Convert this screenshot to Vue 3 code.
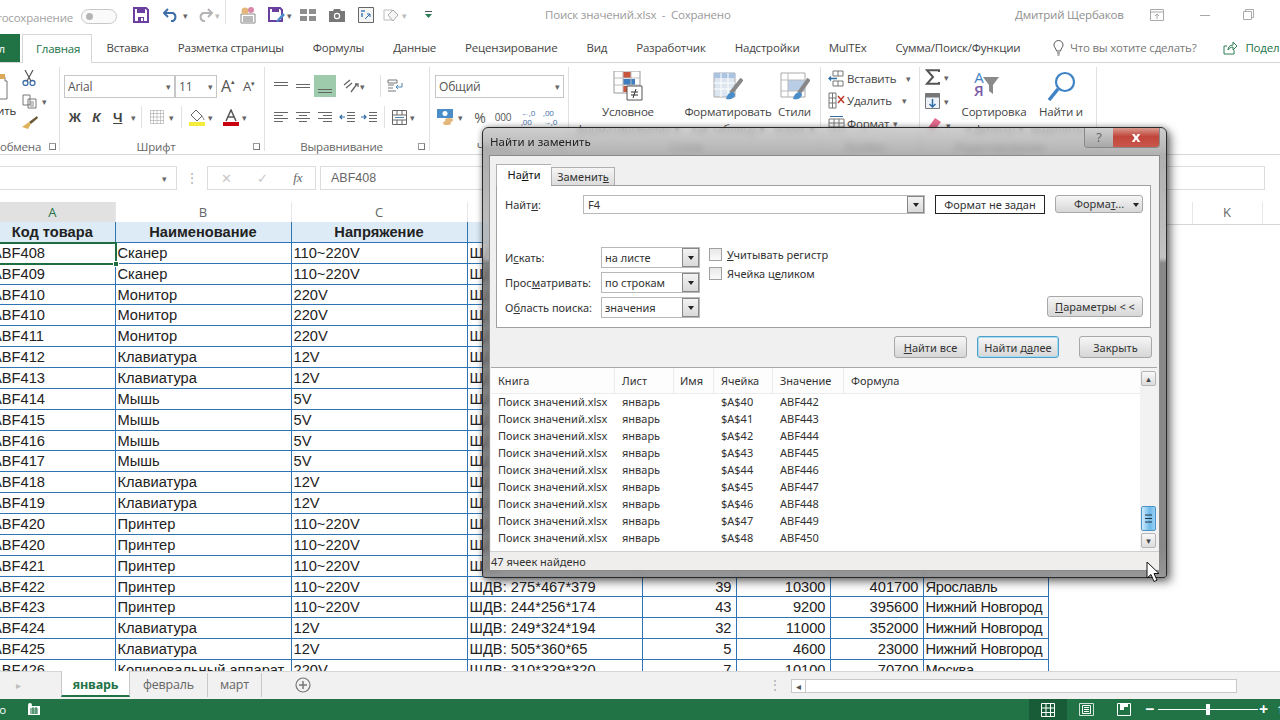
<template>
  <div class="excel">
    <!-- title bar -->
    <div class="titlebar">
      <div class="autosave"><span>Автосохранение</span></div>
      <div class="toggle"><i></i></div>
      <svg class="qa save" width="16" height="16" viewBox="0 0 16 16"><path d="M1 1h12l2 2v12H1z" fill="none" stroke="#6b3fa0" stroke-width="2"/><path d="M4 1h8v5H4zM5 10h6v5H5z" fill="#6b3fa0"/><path d="M8 11h2v3H8z" fill="#fff"/></svg>
      <svg class="qa undo" width="16" height="14" viewBox="0 0 16 14"><path d="M5 1L1 5l4 4M1 5h9a4.500 4.500 0 0 1 0 8H8" fill="none" stroke="#3f6fa8" stroke-width="2"/></svg>
      <span class="caret c-undo">▾</span>
      <svg class="qa redo" width="16" height="14" viewBox="0 0 16 14"><path d="M11 1l4 4-4 4M15 5H6a4.500 4.500 0 0 0 0 8h2" fill="none" stroke="#b5b5b5" stroke-width="2"/></svg>
      <span class="caret c-redo">▾</span>
      <span class="qa-sep"></span>
      <svg class="qa form" width="18" height="18" viewBox="0 0 18 18"><path d="M2 8h14v9H2z" fill="#fff" stroke="#888"/><path d="M4 11h10M4 13h10M4 15h10" stroke="#777"/><circle cx="6" cy="5" r="3.500" fill="#e3b779"/><circle cx="12" cy="4" r="3" fill="#d987a8"/></svg>
      <svg class="qa saveas" width="18" height="16" viewBox="0 0 18 16"><path d="M1 1h11l2 2v11H1z" fill="none" stroke="#6b3fa0" stroke-width="2"/><path d="M4 1h7v4H4z" fill="#6b3fa0"/><path d="M8 14l7-8 2 2-7 7z" fill="#4a8dc9"/></svg>
      <span class="caret c-saveas">▾</span>
      <svg class="qa grid4" width="16" height="12" viewBox="0 0 16 12"><path d="M0 0h7v5H0zM9 0h7v5H9zM0 7h7v5H0zM9 7h7v5H9z" fill="#8e8e8e"/></svg>
      <svg class="qa camera" width="16" height="13" viewBox="0 0 16 13"><path d="M0 2h4l1-2h6l1 2h4v11H0z" fill="#777"/><circle cx="8" cy="7" r="3.200" fill="#fff"/><circle cx="8" cy="7" r="2" fill="#777"/></svg>
      <svg class="qa pivot" width="16" height="16" viewBox="0 0 16 16"><path d="M.5.5h15v15H.5z" fill="#f4f4f4" stroke="#666"/><path d="M3 3h4v2H3zM3 6h2v4H3z" fill="#6f9bc7"/><path d="M7 12l5-5M9 7h3v3" stroke="#2f6ea5" fill="none"/></svg>
      <svg class="qa shape" width="16" height="15" viewBox="0 0 16 15"><path d="M1 2h8v10H1z" fill="none" stroke="#bbb"/><path d="M10 2l5 5-5 6-5-6z" fill="#f5f5f5" stroke="#aaa"/></svg>
      <span class="caret c-shape">▾</span>
      <svg class="qa more" width="7" height="8" viewBox="0 0 7 8"><path d="M0 0h7v1H0z" fill="#555"/><path d="M0 3h7L3.500 7z" fill="#2f7d55"/></svg>
      <div class="doc-title">Поиск значений.xlsx&nbsp; - &nbsp;Сохранено</div>
      <div class="user">Дмитрий Щербаков</div>
      <svg class="win w1" width="14" height="12" viewBox="0 0 14 12"><path d="M.5.5h13v11H.5z" fill="none" stroke="#aaa"/><path d="M.5 3h13M7 10V5M5 7l2-2 2 2" fill="none" stroke="#aaa"/></svg>
      <span class="win w2"></span>
      <svg class="win w3" width="11" height="11" viewBox="0 0 11 11"><path d="M.5 2.500h8v8h-8zM2.500 2.500v-2h8v8h-2" fill="none" stroke="#aaa"/></svg>
    </div>

    <!-- ribbon tabs -->
    <div class="tabs">
      <div class="tab-file"><span>Файл</span></div>
      <div class="tab active">Главная</div>
      <div v-for="t in tabs" :key="t" class="tab">{{ t }}</div>
      <svg class="bulb" width="11" height="16" viewBox="0 0 11 16"><path d="M3.500 11C3 8 1 7.500 1 5a4.500 4.500 0 0 1 9 0c0 2.500-2 3-2.500 6zM4 13h3M4.500 15h2" fill="none" stroke="#555"/></svg>
      <div class="tell">Что вы хотите сделать?</div>
      <svg class="share" width="14" height="14" viewBox="0 0 14 14"><path d="M4 5H1v8h10V9M5 9c0-3 2-5 5-5V1l4 4-4 4V6C8 6 6 7 5 9z" fill="none" stroke="#2f7d55"/></svg>
      <div class="share-text">Поделиться</div>
    </div>

    <!-- ribbon -->
    <div class="ribbon">
      <section class="group g-clip">
        <div class="body clip-body">
          <div class="paste">
            <svg width="8" height="26" viewBox="0 0 8 26"><path d="M-6 3h11v4h2v18H-6z" fill="#fff" stroke="#777"/><path d="M-3 0h8v5h-8z" fill="#dca85a"/></svg>
            <div class="paste-text"><span>Вставить</span></div>
          </div>
          <div class="clip-tools">
            <svg width="14" height="16" viewBox="0 0 14 16"><circle cx="3.500" cy="13" r="2.500" fill="none" stroke="#3f6fa8" stroke-width="1.300"/><circle cx="10.500" cy="13" r="2.500" fill="none" stroke="#3f6fa8" stroke-width="1.300"/><path d="M3 0l6 11M11 0L5 11" stroke="#555" stroke-width="1.200"/></svg>
            <div class="copy-row"><svg width="15" height="15" viewBox="0 0 15 15"><path d="M1 1h7v10H1zM6 5h8v9H6z" fill="#fff" stroke="#777"/><path d="M8 8h4M8 10h4M8 12h4" stroke="#888"/></svg><span class="caret">▾</span></div>
            <svg width="16" height="14" viewBox="0 0 16 14"><path d="M15 0l1 2-7 6-2-2z" fill="#6b5a3a"/><path d="M7 6l2 2-3 5-6-2z" fill="#e0b25c"/></svg>
          </div>
        </div>
        <div class="group-label"><span class="lbl-right"></span><span>обмена</span><i class="launcher"></i></div>
      </section>

      <section class="group g-font">
        <div class="body">
          <div class="row">
            <div class="combo c-name">Arial<span class="caret">▾</span></div>
            <div class="combo c-size">11<span class="caret">▾</span></div>
            <span class="grow-a big">A<sup>▴</sup></span>
            <span class="grow-a small">A<sup>▾</sup></span>
          </div>
          <div class="row row2">
            <b class="fmt f-b">Ж</b>
            <b class="fmt f-i">К</b>
            <b class="fmt f-u">Ч</b>
            <span class="caret c14">▾</span>
            <span class="vsep"></span>
            <svg class="ml9" width="14" height="14" viewBox="0 0 14 14"><path d="M.5.5h13v13H.5zM7 .5v13M.5 7h13M.5 3.500h13M.5 10.500h13M3.500.5v13M10.500.5v13" fill="none" stroke="#999" stroke-dasharray="1 1"/></svg>
            <span class="caret c9">▾</span>
            <span class="vsep sep-fill"></span>
            <svg class="ml7" width="16" height="17" viewBox="0 0 16 17"><path d="M7 1l6 6-5 5-6-6z" fill="#fff" stroke="#666"/><path d="M13 7c1 2 2 3 2 4" stroke="#888"/><path d="M0 13h16v4H0z" fill="#f3ec3c"/></svg>
            <span class="caret c8">▾</span>
            <svg class="ml8" width="16" height="17" viewBox="0 0 16 17"><path d="M3 12L8 1l5 11M5 8h6" fill="none" stroke="#555" stroke-width="1.500"/><path d="M0 13h16v4H0z" fill="#c8000f"/></svg>
            <span class="caret c8">▾</span>
          </div>
        </div>
        <div class="group-label"><span class="lbl-right"></span><span>Шрифт</span><i class="launcher"></i></div>
      </section>

      <section class="group g-align">
        <div class="body">
          <div class="row">
            <svg class="cell22" width="14" height="8" viewBox="0 0 14 8"><path d="M0 .5h14M0 3.500h14" stroke="#666"/></svg>
            <svg class="cell22" width="14" height="8" viewBox="0 0 14 8"><path d="M0 2.500h14M0 5.500h14" stroke="#666"/></svg>
            <div class="al-active"><svg width="14" height="8" viewBox="0 0 14 8"><path d="M0 4.500h14M0 7.500h14" stroke="#666"/></svg></div>
            <svg class="orient" width="16" height="14" viewBox="0 0 16 14"><path d="M1 6l6-5M3 9l6-5M8 13l6-8M12 5h3v3" fill="none" stroke="#666" stroke-width="1.300"/></svg>
            <span class="caret c5">▾</span>
            <span class="vsep sep-wrap"></span>
            <svg class="wrap" width="16" height="16" viewBox="0 0 16 16"><path d="M1 2h9v3H1zM1 7h6M1 10h5M1 13h8" fill="none" stroke="#777"/><path d="M15 5v4H9M11 7L9 9l2 2" fill="none" stroke="#4b86b4"/></svg>
          </div>
          <div class="row row2">
            <svg class="cell22" width="14" height="11" viewBox="0 0 14 11"><path d="M0 .5h14M0 3.500h9M0 6.500h14M0 9.500h9" stroke="#666"/></svg>
            <svg class="cell22" width="14" height="11" viewBox="0 0 14 11"><path d="M0 .5h14M3 3.500h8M0 6.500h14M3 9.500h8" stroke="#666"/></svg>
            <svg class="cell22" width="14" height="11" viewBox="0 0 14 11"><path d="M0 .5h14M5 3.500h9M0 6.500h14M5 9.500h9" stroke="#666"/></svg>
            <svg class="cell22" width="16" height="11" viewBox="0 0 16 11"><path d="M8 .5h8M8 3.500h8M8 6.500h8M8 9.500h8" stroke="#666"/><path d="M6 5H1M3 3L1 5l2 2" fill="none" stroke="#2f6ea5" stroke-width="1.200"/></svg>
            <svg class="cell22" width="16" height="11" viewBox="0 0 16 11"><path d="M8 .5h8M8 3.500h8M8 6.500h8M8 9.500h8" stroke="#666"/><path d="M0 5h5M3 3l2 2-2 2" fill="none" stroke="#2f6ea5" stroke-width="1.200"/></svg>
            <span class="vsep sep-merge"></span>
            <svg class="merge" width="15" height="15" viewBox="0 0 15 15"><path d="M.5.5h14v14H.5zM.5 5h14M.5 10h14M5 .5V5M10 .5V5M5 10v4.500M10 10v4.500" fill="none" stroke="#666"/><path d="M3 7.500h9" stroke="#4b86b4"/></svg>
            <span class="caret c8">▾</span>
          </div>
        </div>
        <div class="group-label"><span class="lbl-right"></span><span>Выравнивание</span><i class="launcher"></i></div>
      </section>

      <section class="group g-num">
        <div class="body">
          <div class="row">
            <div class="combo c-fmt">Общий<span class="caret">▾</span></div>
          </div>
          <div class="row row2">
            <svg class="ml2" width="17" height="16" viewBox="0 0 17 16"><path d="M0 0h16v9H0z" fill="#4a8dc9"/><circle cx="8" cy="4.500" r="2.500" fill="#fff"/><ellipse cx="12" cy="11" rx="4" ry="2" fill="#e3b779"/><ellipse cx="10" cy="14" rx="4" ry="2" fill="#e3b779"/></svg>
            <span class="caret c7">▾</span>
            <span class="num pct">%</span>
            <span class="num thou">000</span>
            <span class="num dec">←,0<br>,00</span>
            <span class="num dec dec2">,00<br>→,0</span>
          </div>
        </div>
        <div class="group-label"><span class="lbl-right"></span><span>Число</span><i class="launcher"></i></div>
      </section>

      <section class="group g-styles">
        <div class="big-btn b1">
          <svg width="30" height="30" viewBox="0 0 30 30"><path d="M1 0h26v22H1z" fill="#fff" stroke="#999"/><path d="M10 1h8v6h-8z" fill="#c8553d"/><path d="M10 8h12v6H10z" fill="#3f7fc1"/><path d="M10 15h6v6h-6z" fill="#c8553d"/><path d="M10 0v22M18 0v22M1 7h26M1 14h26" stroke="#bbb" fill="none"/><path d="M14 15h15v14H14z" fill="#fff" stroke="#555"/><path d="M18 21h7M18 24h7M23 18l-3 9" stroke="#333"/></svg>
          <span>Условное<br>форматирование ▾</span>
        </div>
        <div class="big-btn b2">
          <svg width="30" height="30" viewBox="0 0 30 30"><path d="M1 2h21v24H1z" fill="#dde6f0" stroke="#aaa"/><path d="M1 2h21v5H1z" fill="#a9c3e0"/><path d="M8 2v24M15 2v24M1 12h21M1 18h21" stroke="#fff"/><path d="M29 8L18 22" stroke="#888" stroke-width="4"/><path d="M20 21c-4 0-6 3-7 7 5 1 9-1 9-5z" fill="#4a8dc9"/></svg>
          <span>Форматировать<br>как таблицу ▾</span>
        </div>
        <div class="big-btn b3">
          <svg width="30" height="30" viewBox="0 0 30 30"><path d="M1 2h24v24H1z" fill="#fff" stroke="#aaa"/><path d="M8 9h17v11H8z" fill="#b9cde6"/><path d="M8 2v24M1 9h24M1 20h24" stroke="#bbb"/><path d="M29 8L19 22" stroke="#888" stroke-width="4"/><path d="M20 21c-4 0-6 3-7 7 5 1 9-1 9-5z" fill="#4a8dc9"/></svg>
          <span>Стили<br>ячеек ▾</span>
        </div>
        <div class="group-label styles-label"><span>Стили</span></div>
      </section>

      <section class="group g-cells">
        <div class="cell-tools">
          <div class="cell-tool">
            <svg width="17" height="17" viewBox="0 0 17 17"><path d="M5 1h10v5H5zM5 11h10v5H5zM10 1v5M10 11v5" fill="none" stroke="#777"/><path d="M9 8.500H1M3 6.500l-2 2 2 2" fill="none" stroke="#2f6ea5" stroke-width="1.300"/></svg>
            <span>Вставить</span><span class="caret">▾</span>
          </div>
          <div class="cell-tool">
            <svg width="17" height="17" viewBox="0 0 17 17"><path d="M1 1h7v15H1zM1 6h7M1 11h7M4.500 1v15" fill="none" stroke="#777"/><path d="M10 4l6 7M16 4l-6 7" stroke="#c0392b" stroke-width="1.500"/></svg>
            <span>Удалить</span><span class="caret">▾</span>
          </div>
          <div class="cell-tool">
            <svg width="17" height="17" viewBox="0 0 17 17"><path d="M1 4h15v12H1zM1 8h15M1 12h15M6 4v12M11 4v12" fill="none" stroke="#777"/><path d="M2 1.500h13" stroke="#2f6ea5"/></svg>
            <span>Формат</span><span class="caret">▾</span>
          </div>
        </div>
        <div class="group-label"><span>Ячейки</span></div>
      </section>

      <section class="group g-edit">
        <div class="edit-left">
          <div class="edit-item">
            <svg width="15" height="16" viewBox="0 0 15 16"><path d="M14 3V1.200H2L8 8l-6 6.800h12V13" fill="none" stroke="#555" stroke-width="2"/></svg>
            <span class="caret">▾</span>
          </div>
          <div class="edit-item">
            <svg width="15" height="16" viewBox="0 0 15 16"><path d="M.5.5h14v15H.5z" fill="#eef3f9" stroke="#777"/><path d="M.5.5h14v4H.5z" fill="#777"/><path d="M7.500 6v8M4.500 11l3 3 3-3" fill="none" stroke="#2f6ea5" stroke-width="1.500"/></svg>
            <span class="caret">▾</span>
          </div>
          <div class="edit-item">
            <svg width="17" height="14" viewBox="0 0 17 14"><path d="M10 0l6 4-7 9-6-3z" fill="#e56b8d"/><path d="M3 10l6 3H3z" fill="#f1b9c7"/></svg>
            <span class="caret">▾</span>
          </div>
        </div>
        <div class="big-btn b-sort">
          <div class="sort-ico"><span class="az"><em>А</em><em class="ya">Я</em></span><svg width="16" height="17" viewBox="0 0 16 17"><path d="M0 0h16l-6 8v9l-4-3V8z" fill="#8a8a8a"/></svg></div>
          <span>Сортировка<br>и фильтр ▾</span>
        </div>
        <div class="big-btn b-find">
          <svg width="30" height="30" viewBox="0 0 30 30"><circle cx="19" cy="11" r="9" fill="#fff" stroke="#3f83c4" stroke-width="2.200"/><path d="M12 18L3 29" stroke="#3f83c4" stroke-width="3.500"/></svg>
          <span>Найти и<br>выделить ▾</span>
        </div>
        <div class="group-label edit-label"><span>Редактирование</span></div>
      </section>
    </div>

    <!-- formula bar -->
    <div class="formula-bar">
      <div class="namebox"><span class="caret">▾</span></div>
      <span class="dots">⋮</span>
      <div class="fx-btns">
        <span>✕</span><span>✓</span><em>fx</em>
      </div>
      <div class="fx-input">ABF408</div>
    </div>

    <!-- sheet -->
    <div class="sheet">
      <div class="col-heads">
        <div v-for="c in cols" :key="c" class="col-head" :class="{ sel: c === 'A' }">{{ c }}</div>
      </div>
      <div class="table">
        <div class="th" v-for="(h, i) in heads" :key="i">{{ h }}</div>
        <template v-for="(r, i) in rows" :key="i">
          <div class="td" :class="{ current: i === 0 }">{{ r[0] }}</div>
          <div class="td">{{ r[1] }}</div>
          <div class="td">{{ r[2] }}</div>
          <div class="td">{{ r[3] }}</div>
          <div class="td num-cell">{{ r[4] }}</div>
          <div class="td num-cell">{{ r[5] }}</div>
          <div class="td num-cell">{{ r[6] }}</div>
          <div class="td city">{{ r[7] }}</div>
        </template>
      </div>
    </div>

    <!-- sheet tabs -->
    <div class="sheetbar">
      <span class="sheet-prev">▸</span>
      <div class="sheet-tab current-tab">январь</div>
      <div class="sheet-tab t-feb">февраль</div>
      <div class="sheet-tab t-mar">март</div>
      <svg class="add" width="16" height="16" viewBox="0 0 16 16"><circle cx="8" cy="8" r="7" fill="none" stroke="#777" stroke-width="1.200"/><path d="M4 8h8M8 4v8" stroke="#777" stroke-width="1.500"/></svg>
      <span class="dots sb-dots">⋮</span>
      <div class="hscroll"><span class="hs-left">◂</span><div class="hs-track"></div></div>
    </div>

    <!-- status bar -->
    <div class="statusbar">
      <span class="ready"><span>Готово</span></span>
      <svg class="macro" width="14" height="13" viewBox="0 0 14 13"><path d="M1 3h12v9H1z" fill="#fff"/><path d="M3 6h8M3 8h8M3 10h8M6 4v7M9 4v7" stroke="#217346"/><circle cx="3" cy="2" r="2" fill="#fff"/></svg>
      <div class="view-btn on"><svg width="14" height="14" viewBox="0 0 14 14"><path d="M.5.5h13v13H.5zM.5 5h13M.5 9.500h13M5 .5v13M9.500.5v13" fill="none" stroke="#fff"/></svg></div>
      <div class="view-btn"><svg width="15" height="13" viewBox="0 0 15 13"><path d="M.5.5h14v12H.5z" fill="none" stroke="#cfe3d8"/><path d="M3.500 2.500h8v8h-8zM5 4.500h5M5 6.500h5M5 8.500h5" fill="none" stroke="#fff"/></svg></div>
      <div class="view-btn"><svg width="14" height="13" viewBox="0 0 14 13"><path d="M.5.5h13v12H.5z" fill="none" stroke="#fff"/><path d="M3 0h4v7H3zM7 0v4h4V0z" fill="#fff"/></svg></div>
      <span class="zoom-btn minus">−</span>
      <div class="slider"><i></i></div>
      <span class="zoom-btn plus">+</span>
      <span class="zoom-pct">1</span>
    </div>

    <!-- find dialog -->
    <div class="dialog">
      <div class="dlg-title">
        <span>Найти и заменить</span>
        <div class="dlg-btns"><span class="help">?</span><span class="close">x</span></div>
      </div>
      <div class="dlg-inner">
        <div class="dlg-tabs">
          <div class="dlg-tab on">На<u>й</u>ти</div>
          <div class="dlg-tab">Заменит<u>ь</u></div>
        </div>
        <div class="dlg-panel">
          <div class="find-row">
            <label class="find-label">Найт<u>и</u>:</label>
            <div class="find-input"><span>F4</span><i class="drop"></i></div>
            <div class="no-format">Формат не задан</div>
            <button class="btn fmt-btn"><span>Форма<u>т</u>...</span><i></i></button>
          </div>
          <div class="opts">
            <div class="opt-combos">
              <div class="opt" v-for="o in options" :key="o.value">
                <label><span v-html="o.label"></span></label>
                <div class="opt-combo"><span>{{ o.value }}</span><i class="drop"></i></div>
              </div>
            </div>
            <div class="checks">
              <div class="check"><i></i><span><u>У</u>читывать регистр</span></div>
              <div class="check"><i></i><span>Ячейка ц<u>е</u>ликом</span></div>
            </div>
            <button class="btn params"><span><u>П</u>араметры &lt; &lt;</span></button>
          </div>
        </div>
        <div class="dlg-actions">
          <button class="btn"><u>Н</u>айти все</button>
          <button class="btn primary">Найти д<u>а</u>лее</button>
          <button class="btn">Закрыть</button>
        </div>
        <div class="results">
          <div class="res-main">
            <div class="res-head">
              <div v-for="h in resHeads" :key="h" class="res-col">{{ h }}</div>
            </div>
            <div class="res-row" v-for="r in results" :key="r.cell">
              <span class="rc0">Поиск значений.xlsx</span>
              <span class="rc1">январь</span>
              <span class="rc2"></span>
              <span class="rc3">{{ r.cell }}</span>
              <span class="rc4">{{ r.value }}</span>
            </div>
          </div>
          <div class="res-scroll">
            <span class="sb-btn">▴</span>
            <span class="sb-thumb"><svg width="7" height="9" viewBox="0 0 7 9"><path d="M0 1h7M0 4.500h7M0 8h7" stroke="#234" stroke-width="1"/></svg></span>
            <span class="sb-btn">▾</span>
          </div>
        </div>
        <div class="dlg-status">47 ячеек найдено</div>
      </div>
    </div>

    <!-- mouse cursor -->
    <svg class="cursor" width="14" height="22" viewBox="0 0 14 22"><path d="M1 1v16l4-3.500 3 7 3-1.300-3-6.700h5z" fill="#fff" stroke="#111"/></svg>
  </div>
</template>

<script setup>
const tabs = ['Вставка', 'Разметка страницы', 'Формулы', 'Данные', 'Рецензирование', 'Вид', 'Разработчик', 'Надстройки', 'MulTEx', 'Сумма/Поиск/Функции']
const cols = ['A', 'B', 'C', 'D', 'E', 'F', 'G', 'H', 'I', 'J', 'K', 'L']
const heads = ['Код товара', 'Наименование', 'Напряжение', 'Размеры', 'Кол-во', 'Цена', 'Сумма', 'Город']

const V = '110~220V'
const rows = [
  ['ABF408', 'Сканер', V, 'ШДВ'],
  ['ABF409', 'Сканер', V, 'ШДВ'],
  ['ABF410', 'Монитор', '220V', 'ШДВ'],
  ['ABF410', 'Монитор', '220V', 'ШДВ'],
  ['ABF411', 'Монитор', '220V', 'ШДВ'],
  ['ABF412', 'Клавиатура', '12V', 'ШДВ'],
  ['ABF413', 'Клавиатура', '12V', 'ШДВ'],
  ['ABF414', 'Мышь', '5V', 'ШДВ'],
  ['ABF415', 'Мышь', '5V', 'ШДВ'],
  ['ABF416', 'Мышь', '5V', 'ШДВ'],
  ['ABF417', 'Мышь', '5V', 'ШДВ'],
  ['ABF418', 'Клавиатура', '12V', 'ШДВ'],
  ['ABF419', 'Клавиатура', '12V', 'ШДВ'],
  ['ABF420', 'Принтер', V, 'ШДВ'],
  ['ABF420', 'Принтер', V, 'ШДВ'],
  ['ABF421', 'Принтер', V, 'ШДВ'],
  ['ABF422', 'Принтер', V, 'ШДВ: 275*467*379', 39, 10300, 401700, 'Ярославль'],
  ['ABF423', 'Принтер', V, 'ШДВ: 244*256*174', 43, 9200, 395600, 'Нижний Новгород'],
  ['ABF424', 'Клавиатура', '12V', 'ШДВ: 249*324*194', 32, 11000, 352000, 'Нижний Новгород'],
  ['ABF425', 'Клавиатура', '12V', 'ШДВ: 505*360*65', 5, 4600, 23000, 'Нижний Новгород'],
  ['ABF426', 'Копировальный аппарат', '220V', 'ШДВ: 310*329*320', 7, 10100, 70700, 'Москва']
]

const options = [
  { label: 'И<u>с</u>кать:', value: 'на листе' },
  { label: 'Прос<u>м</u>атривать:', value: 'по строкам' },
  { label: 'О<u>б</u>ласть поиска:', value: 'значения' }
]

const resHeads = ['Книга', 'Лист', 'Имя', 'Ячейка', 'Значение', 'Формула']
const results = Array.from({ length: 9 }, (_, i) => ({
  cell: `$A$${40 + i}`,
  value: `ABF${442 + i}`
}))
</script>

<style>
html, body { margin: 0; background: #fff; overflow: hidden; }
</style>

<style scoped>
.excel {
  position: relative;
  width: 1280px;
  height: 720px;
  overflow: hidden;
  display: flex;
  flex-direction: column;
  background: #fff;
  font-family: "Open Sans", "Noto Sans", sans-serif;
  font-size: 11.500px;
  letter-spacing: -.2px;
  color: #444;
}
.caret { font-size: 9px; color: #666; line-height: 1; }

/* title bar */
.titlebar { height: 34px; flex: none; display: flex; align-items: center; position: relative; color: #999; padding-bottom: 4px; box-sizing: border-box; }
.autosave { width: 73px; display: flex; justify-content: flex-end; overflow: hidden; white-space: nowrap; margin-top: 4px; color: #a2a2a2; }
.toggle { width: 36px; height: 15px; margin: 2px 0 0 8px; border: 1px solid #c8c8c8; border-radius: 9px; box-sizing: border-box; background: #fafafa; display: flex; align-items: center; padding-left: 4px; }
.toggle i { width: 7px; height: 7px; border-radius: 50%; background: #b5b5b5; }
.qa { flex: none; }
.save { margin-left: 16px; }
.undo { margin-left: 14px; }
.c-undo { margin-left: 4px; }
.redo { margin-left: 9px; }
.c-redo { margin-left: 2px; color: #bbb; }
.qa-sep { width: 1px; height: 24px; background: #e1e1e1; margin: -6px 0 0 5px; }
.form { margin-left: 13px; }
.saveas { margin-left: 11px; }
.c-saveas { margin-left: 1px; }
.grid4 { margin-left: 9px; }
.camera { margin-left: 13px; }
.pivot { margin-left: 13px; }
.shape { margin-left: 9px; }
.c-shape { margin-left: 3px; color: #bbb; }
.more { margin-left: 18px; }
.doc-title { position: absolute; left: 545px; top: 7px; color: #9a9a9a; white-space: nowrap; }
.user { position: absolute; left: 1015px; top: 7px; color: #8f8f8f; white-space: nowrap; }
.win { position: absolute; }
.w1 { left: 1150px; top: 9px; }
.w2 { left: 1200px; top: 15px; width: 10px; height: 1px; background: #aaa; }
.w3 { left: 1243px; top: 9px; }

/* ribbon tabs */
.tabs { height: 29px; flex: none; display: flex; border-bottom: 1px solid #d6d6d6; box-sizing: border-box; position: relative; white-space: nowrap; }
.tabs > * { flex: none; }
.tab-file { width: 20px; background: #217346; color: #fff; display: flex; justify-content: flex-end; overflow: hidden; align-items: center; margin-right: 2px; height: 28px; padding-right: 15px; box-sizing: border-box; }
.tab { padding: 0 14.5px; line-height: 28px; color: #444; }
.tab.active { color: #217346; background: #fff; border: 1px solid #d6d6d6; border-bottom: 0; height: 29px; box-sizing: border-box; width: 70px; padding: 0 13px; line-height: 28px; margin-right: 0; }
.bulb { margin: 6px 0 0 18px; }
.tell { margin: 0 0 0 6px; line-height: 28px; color: #777; }
.share { margin: 7px 0 0 27px; }
.share-text { margin-left: 8px; line-height: 28px; color: #217346; }

/* ribbon */
.ribbon { height: 92px; flex: none; display: flex; border-bottom: 1px solid #d6d6d6; box-sizing: border-box; }
.group { flex: none; position: relative; display: flex; flex-direction: column; box-sizing: border-box; border-right: 1px solid #e1e1e1; margin: 4px 0; height: 84px; }
.body { height: 66px; padding-top: 7px; box-sizing: content-box; }
.group-label { margin-top: auto; margin-bottom: -4px; height: 18px; padding-right: 16px; display: grid; grid-template-columns: 1fr auto 1fr; align-items: center; color: #666; font-size: 11.500px; white-space: nowrap; }
.group-label span:only-child { grid-column: 2; }
.launcher { justify-self: end; margin-right: -12px; width: 6px; height: 6px; border-left: 1px solid #999; border-top: 1px solid #999; box-shadow: inset -2px -2px 0 -1px #777; }
.row { display: flex; align-items: center; height: 24px; }
.row2 { margin-top: 7px; }
.vsep { width: 1px; height: 22px; background: #e1e1e1; flex: none; }

.g-clip { width: 60px; }
.clip-body { display: flex; }
.paste { width: 22px; display: flex; flex-direction: column; }
.paste-text { display: flex; justify-content: flex-end; width: 16px; overflow: hidden; white-space: nowrap; color: #333; margin-top: 3px; }
.clip-tools { display: flex; flex-direction: column; align-items: flex-start; margin: -4px 0 0 0; gap: 7.5px; }
.copy-row { display: flex; align-items: center; gap: 5px; }
.g-clip .group-label { grid-template-columns: 1fr auto 19px; padding-right: 0; }
.g-clip .launcher { margin-right: 4px; }

.g-font { width: 205px; padding-left: 4px; }
.combo { height: 23px; border: 1px solid #c6c6c6; box-sizing: border-box; display: flex; align-items: center; justify-content: space-between; padding: 0 3px; font-size: 12px; color: #555; background: #fff; }
.c-name { width: 111px; }
.c-size { width: 42px; }
.grow-a { display: flex; color: #555; line-height: 1; }
.grow-a sup { font-size: 7px; color: #555; }
.big { font-size: 16px; margin-left: 4px; width: 22px; }
.small { font-size: 13px; margin-left: 0; }
.fmt { font-family: "Liberation Sans", sans-serif; font-size: 13.500px; color: #444; width: 21.500px; text-align: center; flex: none; }
.f-i { font-style: italic; }
.f-u { text-decoration: underline; }
.c14 { margin-left: 2px; width: 10px; }
.ml9 { margin-left: 8px; }
.c9 { margin-left: 5px; width: 9px; }
.sep-fill { margin-left: 3px; }
.ml7 { margin-left: 7px; }
.c8 { margin-left: 3px; width: 8px; }
.ml8 { margin-left: 7px; }
.ml2 { margin-left: 2px; }

.g-align { width: 165px; padding-left: 5px; }
.cell22 { width: 22px; flex: none; }
.al-active { width: 22px; height: 22px; background: #9ecbab; display: flex; align-items: center; justify-content: center; padding-top: 6px; box-sizing: border-box; }
.orient { margin-left: 7px; }
.c5 { margin-left: 1px; width: 10px; }
.sep-wrap { margin-left: 10px; }
.wrap { margin-left: 6px; }
.sep-merge { margin-left: 4px; }
.merge { margin-left: 7px; }

.g-num { width: 139px; padding-left: 5px; }
.c-fmt { width: 129px; }
.num { color: #555; font-size: 11px; flex: none; }
.c7 { margin-left: 4px; width: 10px; }
.pct { font-size: 14px; margin-left: 1px; width: 22px; text-align: center; }
.thou { font-size: 10px; width: 24px; text-align: center; }
.num.dec { font-size: 8px; line-height: 9px; color: #3f6fa8; margin-left: 6px; }
.num.dec2 { margin-left: 8px; }

.big-btn { display: flex; flex-direction: column; align-items: center; text-align: center; color: #444; line-height: 17px; white-space: nowrap; }
.big-btn svg { margin-bottom: 2px; flex: none; }
.g-styles { width: 252px; display: flex; flex-flow: row wrap; align-content: flex-start; padding-top: 4px; }
.g-styles .big-btn { height: 62px; }
.b1 { width: 118px; }
.b2 { width: 82px; }
.b3 { width: 51px; }
.styles-label { width: 100%; margin-top: 4px; }

.g-cells { width: 99px; padding: 1.5px 0 0 7px; }
.cell-tools { height: 66px; flex: none; display: flex; flex-direction: column; gap: 3.5px; }
.cell-tool { height: 19px; flex: none; display: flex; align-items: center; gap: 2px; white-space: nowrap; color: #444; }
.cell-tool .caret { margin-left: 8px; }
.cell-tool:last-child .caret { margin-left: 2px; }

.g-edit { width: 177px; display: flex; flex-flow: row wrap; align-content: flex-start; }
.edit-left { width: 40px; height: 62px; padding: 0 0 0 5px; box-sizing: border-box; display: flex; flex-direction: column; gap: 4px; }
.edit-item { display: flex; align-items: center; gap: 4px; height: 20px; flex: none; }
.b-sort { width: 68px; padding-top: 4px; height: 62px; }
.sort-ico { display: flex; flex: none; height: 30px; margin: 0 0 2px 14px; align-self: flex-start; }
.sort-ico svg { margin: 6px 0 0 -1px; }
.az { display: flex; flex-direction: column; font-size: 15px; line-height: 13px; font-weight: 700; }
.az em { font-style: normal; color: #3f83c4; font-weight: 400; }
.az .ya { color: #7a5aa6; font-weight: 600; }
.b-find { width: 66px; padding-top: 4px; height: 62px; }
.edit-label { width: 100%; margin-top: 4px; }

/* formula bar */
.formula-bar { height: 47px; flex: none; display: flex; align-items: flex-start; padding-top: 11px; box-sizing: border-box; }
.namebox { width: 177px; height: 24px; border: 1px solid #dcdcdc; border-left: 0; box-sizing: border-box; display: flex; align-items: center; justify-content: flex-end; padding-right: 9px; }
.dots { color: #aaa; font-size: 12px; line-height: 24px; width: 30px; text-align: center; }
.fx-btns { width: 109px; height: 24px; border: 1px solid #dcdcdc; box-sizing: border-box; display: flex; align-items: center; justify-content: space-around; color: #c8c8c8; font-size: 13px; }
.fx-btns em { color: #666; font-family: "Liberation Serif", serif; }
.fx-input { margin-left: 4px; width: 945px; height: 24px; border: 1px solid #dcdcdc; box-sizing: border-box; padding-left: 10px; line-height: 22px; font-family: "Liberation Sans", Arial, sans-serif; font-size: 12.500px; letter-spacing: 0; color: #666; }

/* sheet */
.sheet { flex: 1; min-height: 0; overflow: hidden; margin-left: -10px; font-family: "Liberation Sans", Arial, sans-serif; font-size: 14.660px; letter-spacing: 0; color: #222; }
.col-heads { display: grid; grid-template-columns: 125.500px 176px 176px 175px 94px 94px 93px 125px 72px 72px 70px 70px; height: 20px; }
.col-head { text-align: center; font-family: "Open Sans", sans-serif; font-size: 13px; line-height: 21px; color: #666; border-right: 1px solid #e6e6e6; box-sizing: border-box; border-bottom: 1px solid #d6d6d6; }
.col-head.sel { background: #e1e1e1; color: #217346; border-bottom: 2px solid #217346; }
.table { display: grid; grid-template-columns: 125.500px 176px 176px 175px 94px 94px 93px 125px; grid-auto-rows: 20.860px; width: 1058.500px; }
.th, .td { border-right: 1px solid #2f75b5; border-bottom: 1px solid #2f75b5; box-sizing: border-box; white-space: nowrap; overflow: hidden; padding: 0 2px; line-height: 20px; }
.th { background: #ddebf7; font-weight: 700; text-align: center; }
.num-cell { text-align: right; padding-right: 4px; }
.city { letter-spacing: -.3px; }
.td.current { position: relative; overflow: visible; outline: 2px solid #1e6e42; outline-offset: -1px; }
.td.current::after { content: ""; position: absolute; right: -4px; bottom: -4px; width: 6px; height: 6px; background: #1e6e42; border: 1px solid #fff; box-sizing: border-box; }

/* sheet tabs */
.sheetbar { height: 28px; flex: none; background: #f1f1f1; display: flex; align-items: flex-start; border-top: 1px solid #d6d6d6; box-sizing: border-box; position: relative; z-index: 1; }
.sheet-prev { width: 61px; text-align: center; color: #bdbdbd; font-size: 10px; line-height: 26px; padding-right: 24px; box-sizing: border-box; }
.sheet-tab { height: 24px; line-height: 24px; text-align: center; color: #666; font-size: 12.500px; border-right: 1px solid #c8c8c8; box-sizing: border-box; margin-top: 1px; }
.current-tab { width: 69px; background: #fff; color: #217346; font-weight: 700; border-left: 1px solid #c8c8c8; height: 26px; margin-top: -1px; border-bottom: 2px solid #217346; line-height: 27px; }
.t-feb { width: 78px; }
.t-mar { width: 54px; }
.add { margin: 5px 0 0 33px; }
.sb-dots { position: absolute; left: 760px; top: 1px; }
.hscroll { position: absolute; left: 791px; top: 7px; width: 446px; height: 14px; display: flex; }
.hs-left { width: 15px; font-size: 10px; line-height: 13px; text-align: center; color: #555; background: #fff; border: 1px solid #c8c8c8; box-sizing: border-box; }
.hs-track { flex: 1; background: #fff; border: 1px solid #c8c8c8; border-left: 0; }

/* status bar */
.statusbar { height: 21px; flex: none; background: #217346; display: flex; align-items: center; color: #fff; position: relative; }
.statusbar > * { flex: none; }
.ready { width: 6px; display: flex; justify-content: flex-end; overflow: hidden; }
.macro { margin-left: 21px; }
.view-btn { height: 21px; width: 38px; display: flex; align-items: center; justify-content: center; }
.view-btn.on { margin-left: 988px; background: #185c37; }
.zoom-btn { font-size: 16px; line-height: 21px; font-weight: 700; }
.minus { margin-left: 2px; width: 12px; }
.slider { width: 100px; height: 1px; background: #fff; position: relative; margin-left: 1px; }
.slider i { position: absolute; left: 48px; top: -5px; width: 4px; height: 11px; background: #fff; }
.plus { margin-left: 1px; width: 14px; }
.zoom-pct { margin-left: 4px; }

/* dialog */
.dialog {
  position: absolute;
  left: 482px;
  top: 127px;
  width: 685px;
  height: 451px;
  box-sizing: border-box;
  z-index: 5;
  border: 1px solid #2a2a2a;
  border-radius: 6px 6px 3px 3px;
  padding: 0 6px 6px 6px;
  display: flex;
  flex-direction: column;
  background: linear-gradient(to bottom, rgba(190, 190, 190, .75) 0, rgba(150, 150, 150, .75) 28px, rgba(170, 170, 170, .7) 130px, rgba(90, 90, 90, .72) 135px, rgba(90, 90, 90, .72) 420px, rgba(140, 140, 140, .9) 100%);
  backdrop-filter: blur(3px);
  box-shadow: 4px 4px 10px rgba(0, 0, 0, .5), 0 0 6px rgba(0, 0, 0, .3);
  font-family: "Noto Sans", "DejaVu Sans", sans-serif;
  font-size: 11px;
  letter-spacing: 0;
  color: #333;
}
.dlg-title { height: 27px; flex: none; display: flex; align-items: center; padding-left: 1px; font-size: 11.500px; color: #222; position: relative; }
.dlg-btns { margin-left: auto; align-self: flex-start; display: flex; height: 19px; border: 1px solid #888; border-top: 0; border-radius: 0 0 4px 4px; overflow: hidden; margin-right: 0; }
.help { width: 28px; text-align: center; line-height: 18px; color: #666; font-size: 13px; background: linear-gradient(#cfcfcf, #a8a8a8); }
.close { width: 46px; text-align: center; line-height: 16px; color: #fff; font-weight: 700; font-size: 15px; background: linear-gradient(#d99a8e, #c2453a 45%, #c9574c); }
.dlg-inner { flex: 1; min-height: 0; background: #f0f0f0; border: 1px solid #8b8b8b; box-sizing: border-box; display: flex; flex-direction: column; padding-top: 8px; }
.dlg-tabs { display: flex; margin-left: 6px; height: 21px; align-items: flex-end; position: relative; z-index: 1; flex: none; }
.dlg-tab { width: 64px; height: 18px; line-height: 17px; text-align: center; background: linear-gradient(#f5f5f5, #dcdcdc); border: 1px solid #b0b0b0; border-bottom: 0; box-sizing: border-box; }
.dlg-tab.on { width: 55px; background: #fff; line-height: 20px; margin-bottom: -1px; height: 22px; border-right: 0; color: #111; }
.dlg-panel { margin: 0 8px 0 6px; height: 143px; flex: none; background: #fff; border: 1px solid #a0a0a0; box-sizing: border-box; padding: 9px 7px 0 8px; display: flex; flex-direction: column; }
.find-row { display: flex; align-items: flex-start; height: 20px; }
.find-label { width: 78px; line-height: 20px; flex: none; }
.find-input { width: 342px; height: 19px; border: 1px solid #b8b8b8; box-sizing: border-box; display: flex; align-items: center; justify-content: space-between; padding-left: 4px; flex: none; }
.drop { display: flex; align-items: center; justify-content: center; width: 17px; height: 100%; background: linear-gradient(#f3f3f3, #d9d9d9); border: 1px solid #888; box-sizing: border-box; flex: none; }
.drop::after { content: ""; border: 3.500px solid transparent; border-top: 4px solid #222; margin-top: 4px; }
.no-format { width: 110px; height: 19px; border: 1px solid #222; box-sizing: border-box; margin-left: 10px; text-align: center; line-height: 17px; flex: none; }
.btn { font: inherit; color: #333; height: 22px; border: 1px solid #a8a8a8; border-radius: 3px; background: linear-gradient(#f6f6f6, #e6e6e6 50%, #d7d7d7); padding: 0; flex: none; }
.fmt-btn { width: 88px; height: 18px; margin-left: 10px; display: flex; align-items: center; padding: 0 3px 0 18px; line-height: 16px; }
.fmt-btn i { border: 3px solid transparent; border-top: 4px solid #222; margin: 4px 0 0 auto; }
.opts { margin-top: 32px; display: flex; align-items: flex-start; }
.opt-combos { display: flex; flex-direction: column; gap: 4px; }
.opt { display: flex; align-items: center; height: 21px; }
.opt label { width: 96px; flex: none; }
.opt-combo { width: 99px; height: 21px; border: 1px solid #b8b8b8; box-sizing: border-box; display: flex; align-items: center; justify-content: space-between; padding-left: 3px; }
.checks { margin-left: 9px; display: flex; flex-direction: column; gap: 5px; }
.check { display: flex; align-items: center; gap: 5px; height: 14px; }
.check i { width: 13px; height: 13px; border: 1px solid #a0a0a0; box-sizing: border-box; background: linear-gradient(#e8e8e8, #fafafa); }
.params { width: 96px; height: 21px; margin: 49px 0 0 auto; }
.dlg-actions { height: 39px; flex: none; display: flex; justify-content: flex-end; align-items: flex-start; padding: 8px 7px 0 0; box-sizing: border-box; gap: 10px; }
.dlg-actions .btn { width: 73px; }
.dlg-actions .btn.primary { width: 82px; margin-right: 10px; border-color: #4f9fc9; box-shadow: inset 0 0 0 1px #a6dcf0; }
.results { flex: none; height: 184px; margin-left: 1px; margin-right: 2px; background: #fff; display: flex; border-top: 1px solid #a8a8a8; box-sizing: border-box; }
.res-main { flex: 1; min-width: 0; }
.res-head { height: 25px; display: flex; align-items: center; border-bottom: 1px solid #ececec; background: #fdfdfd; margin-bottom: -1px; }
.res-col { padding-left: 7px; box-sizing: border-box; height: 100%; line-height: 25px; border-right: 1px solid #ececec; flex: none; }
.res-col:nth-child(1) { width: 124px; }
.res-col:nth-child(2) { width: 59px; }
.res-col:nth-child(3) { width: 40px; padding-left: 6px; }
.res-col:nth-child(4) { width: 59px; }
.res-col:nth-child(5) { width: 71px; }
.res-col:nth-child(6) { width: 120px; border-right: 0; }
.res-row { height: 17px; display: flex; line-height: 17px; white-space: nowrap; }
.rc0 { width: 124px; padding-left: 7px; box-sizing: border-box; }
.rc1 { width: 59px; padding-left: 7px; box-sizing: border-box; }
.rc2 { width: 40px; }
.rc3 { width: 59px; padding-left: 7px; box-sizing: border-box; }
.rc4 { width: 71px; padding-left: 7px; box-sizing: border-box; }
.res-scroll { width: 17px; flex: none; background: #f2f2f2; display: flex; flex-direction: column; align-items: center; padding-top: 3px; box-sizing: border-box; }
.sb-btn { width: 15px; height: 15px; border: 1px solid #b5b5b5; border-radius: 2px; box-sizing: border-box; background: linear-gradient(#f8f8f8, #dcdcdc); font-size: 9px; line-height: 13px; text-align: center; color: #444; flex: none; }
.sb-thumb { width: 15px; height: 25px; margin-top: auto; background: linear-gradient(90deg, #cfeafc, #6db9ea 60%, #9bd2f4); border: 1px solid #4a93c6; border-radius: 2px; box-sizing: border-box; display: flex; align-items: center; justify-content: center; flex: none; }
.res-scroll .sb-btn:last-child { margin: 2px 0 3px; }
.dlg-status { flex: 1; min-height: 0; background: #f0eeec; border-top: 1px solid #cfcfcf; padding-left: 1px; line-height: 20px; color: #333; }

.cursor { position: absolute; left: 1146px; top: 561px; z-index: 6; }
</style>
